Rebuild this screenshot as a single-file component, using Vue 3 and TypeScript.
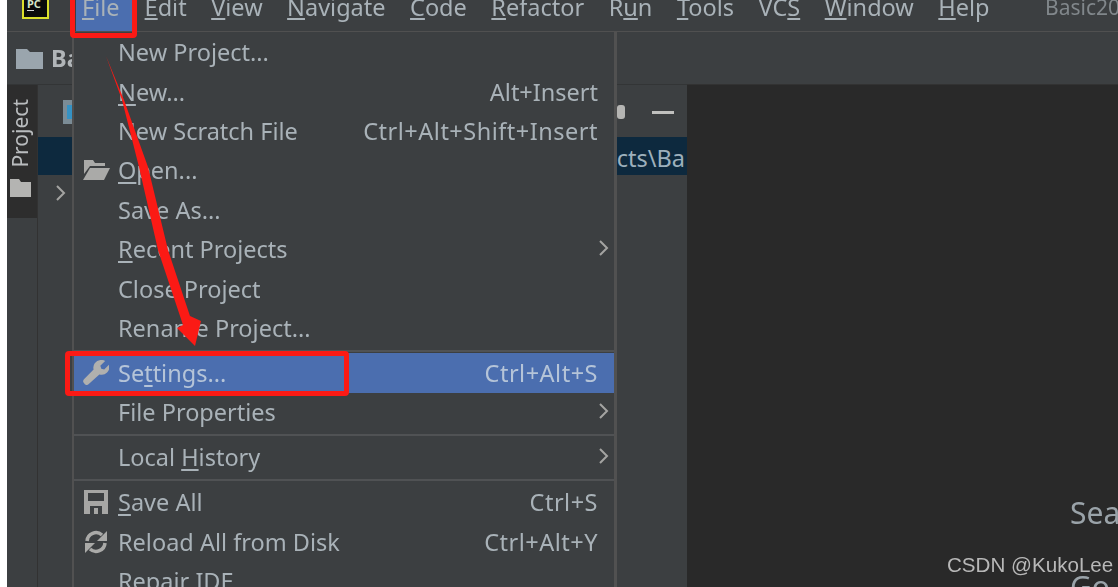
<script setup lang="ts">
interface Part { before: string; key?: string; after?: string }
interface MenuRow {
  label: Part
  shortcut?: string
  icon?: 'open' | 'wrench' | 'save' | 'reload'
  submenu?: boolean
  active?: boolean
  rule?: boolean
}

const topMenu: Part[] = [
  { before: '', key: 'F', after: 'ile' },
  { before: '', key: 'E', after: 'dit' },
  { before: '', key: 'V', after: 'iew' },
  { before: '', key: 'N', after: 'avigate' },
  { before: '', key: 'C', after: 'ode' },
  { before: '', key: 'R', after: 'efactor' },
  { before: 'R', key: 'u', after: 'n' },
  { before: '', key: 'T', after: 'ools' },
  { before: 'VC', key: 'S', after: '' },
  { before: '', key: 'W', after: 'indow' },
  { before: '', key: 'H', after: 'elp' },
]

const rows: MenuRow[] = [
  { label: { before: 'New Project...' } },
  { label: { before: '', key: 'N', after: 'ew...' }, shortcut: 'Alt+Insert' },
  { label: { before: 'New Scratch File' }, shortcut: 'Ctrl+Alt+Shift+Insert' },
  { label: { before: '', key: 'O', after: 'pen...' }, icon: 'open' },
  { label: { before: 'Save As...' } },
  { label: { before: '', key: 'R', after: 'ecent Projects' }, submenu: true },
  { label: { before: 'Close Project' } },
  { label: { before: 'Rename Project...' }, rule: true },
  { label: { before: 'Se', key: 't', after: 'tings...' }, shortcut: 'Ctrl+Alt+S', icon: 'wrench', active: true },
  { label: { before: 'File Properties' }, submenu: true, rule: true },
  { label: { before: 'Local ', key: 'H', after: 'istory' }, submenu: true, rule: true },
  { label: { before: '', key: 'S', after: 'ave All' }, shortcut: 'Ctrl+S', icon: 'save' },
  { label: { before: 'Reload All from Disk' }, shortcut: 'Ctrl+Alt+Y', icon: 'reload' },
  { label: { before: 'Repair IDE' } },
]

const isCtrl = (r: MenuRow): boolean => (r.shortcut ?? '').startsWith('Ctrl')
</script>

<template>
  <div class="page">
    <div class="ide">
      <header class="menubar">
        <div class="logo"><span class="logo-text">PC</span><span class="logo-dash"></span></div>
        <nav class="menus">
          <span v-for="(m, i) in topMenu" :key="i" class="menu-item" :class="{ open: i === 0 }">{{ m.before }}<u>{{ m.key }}</u>{{ m.after }}</span>
        </nav>
        <span class="title">Basic2021</span>
      </header>
      <div class="toolbar">
        <svg class="crumb-icon" width="27" height="21" viewBox="0 0 27 21"><path d="M0 1h11l3 3h13v17H0z" fill="#9aa5ad" /></svg>
        <b class="crumb">Basic</b>
      </div>
      <main class="body">
        <aside class="stripe">
          <div class="tab">
            <span class="tab-text">Project</span>
            <svg width="21" height="18" viewBox="0 0 21 18"><path d="M0 0h9l2 3h10v15H0z" fill="#b4b4b2" /></svg>
          </div>
        </aside>
        <section class="project">
          <div class="project-head">
            <span class="module-icon"><i></i></span>
            <span class="head-actions"><span class="gear"></span><span class="minimize"></span></span>
          </div>
          <div class="path-row"><span>cts\Ba</span></div>
          <svg class="chevron" width="12" height="18" viewBox="0 0 12 18"><path d="M2 2l7 7-7 7" fill="none" stroke="#a4a4a2" stroke-width="2" /></svg>
        </section>
        <section class="editor">
          <span class="hint search">Search Everywhere</span>
          <span class="hint goto">Go to File</span>
        </section>
      </main>
    </div>

    <div class="file-menu">
      <template v-for="(r, i) in rows" :key="i">
        <div class="row" :class="{ active: r.active }">
          <span class="row-icon">
            <svg v-if="r.icon === 'open'" width="27" height="20" viewBox="0 0 27 20">
              <path d="M1 0h9l2 3h10v3H7L1 14z" fill="#aaaaa8" />
              <path d="M7 8h20l-6 12H0z" fill="#aaaaa8" />
            </svg>
            <svg v-else-if="r.icon === 'wrench'" width="26" height="25" viewBox="0 0 27 26">
              <path d="M18 0a8 8 0 0 1 5 1l-5 5 1 3 3 1 5-5a8 8 0 0 1-10 10L6 25a3 3 0 0 1-5-1 3 3 0 0 1 0-4L11 10A8 8 0 0 1 18 0z" fill="#b0b0ae" />
            </svg>
            <svg v-else-if="r.icon === 'save'" width="24" height="24" viewBox="0 0 24 24">
              <path fill-rule="evenodd" d="M0 0h24v24H0zM4 3v8h16V3zM6 16v8h12v-8zM10 18h4v6h-4z" fill="#a6a6a4" />
            </svg>
            <svg v-else-if="r.icon === 'reload'" width="24" height="26" viewBox="0 0 24 26">
              <path d="M3 12a9 9 0 0 1 15-6" fill="none" stroke="#aaaaa8" stroke-width="3.5" />
              <path d="M23 2v10H13z" fill="#aaaaa8" />
              <path d="M21 14a9 9 0 0 1-15 6" fill="none" stroke="#aaaaa8" stroke-width="3.5" />
              <path d="M1 24V14h10z" fill="#aaaaa8" />
            </svg>
          </span>
          <span class="row-label">{{ r.label.before }}<u v-if="r.label.key">{{ r.label.key }}</u>{{ r.label.after }}</span>
          <span v-if="r.shortcut" class="row-shortcut" :class="{ ctrl: isCtrl(r) }">{{ r.shortcut }}</span>
          <svg v-if="r.submenu" class="row-arrow" width="12" height="18" viewBox="0 0 12 18"><path d="M2 2l7 7-7 7" fill="none" stroke="#a4a4a2" stroke-width="2" /></svg>
        </div>
        <div v-if="r.rule" class="sep"></div>
      </template>
    </div>

    <div class="mark mark-file"></div>
    <div class="mark mark-settings"></div>
    <svg class="mark-arrow" width="1118" height="587" viewBox="0 0 1118 587">
      <path d="M106 56L124 100 148 167 168 250 190 316 201 321 195 346 177 328 183 325 158 250 139 167 122 100z" fill="#fb1a15" />
    </svg>
    <span class="watermark">CSDN @KukoLee</span>
  </div>
</template>

<style>
html, body { margin: 0; background: #fff; overflow: hidden; }
</style>

<style scoped>
.page {
  position: relative;
  width: 1118px;
  height: 587px;
  overflow: hidden;
  background: #fff;
  font-family: "Noto Sans", "Open Sans", sans-serif;
  color: #a9b2b8;
}
.ide {
  margin-left: 7px;
  height: 587px;
  display: flex;
  flex-direction: column;
  background: #3c3f41;
  filter: blur(0.35px);
}
.menubar {
  height: 31px;
  flex: none;
  display: flex;
  align-items: flex-start;
  border-bottom: 1px solid #505050;
  font-size: 23.5px;
  line-height: 14px;
}
.logo {
  width: 27px;
  height: 19px;
  margin-left: 15px;
  flex: none;
  box-sizing: border-box;
  border: 2.5px solid #dce02c;
  border-top: none;
  background: #0b0b0b;
  color: #d6e6c8;
  font: bold 11px/8px "Noto Sans", sans-serif;
  padding-left: 3px;
  overflow: hidden;
}
.logo-text { display: block; }
.logo-dash { display: block; width: 7px; height: 1px; margin-top: 2px; background: #d8d8d8; }
.menus {
  display: flex;
  margin-left: 27px;
}
.menu-item {
  padding: 0 6px;
  margin-right: 12.5px;
  height: 31px;
  white-space: nowrap;
}
.menu-item.open { background: #4b6eaf; padding-right: 12px; margin-right: 7px; }
.menu-item u { text-underline-offset: 2px; text-decoration-thickness: 1.5px; }
.title {
  position: absolute;
  left: 1038px;
  top: 0;
  color: #81878b;
  font-size: 21px;
  line-height: 15px;
}
.toolbar {
  height: 53px;
  flex: none;
  display: flex;
  align-items: center;
  padding-left: 9px;
  gap: 8px;
  box-sizing: border-box;
  border-bottom: 1px solid #333536;
}
.crumb { color: #b1b5b8; font-size: 23.5px; }
.body { flex: 1; display: flex; min-height: 0; }
.stripe {
  width: 31px;
  flex: none;
  box-sizing: border-box;
  border-right: 1px solid #323232;
}
.tab {
  height: 133px;
  background: #2d2d2d;
  display: flex;
  flex-direction: column;
  align-items: center;
  padding: 14px 4px 0 0;
  box-sizing: border-box;
  gap: 11px;
}
.tab-text {
  writing-mode: vertical-rl;
  transform: rotate(180deg);
  color: #b9bcbe;
  font-size: 21px;
  line-height: 22px;
}
.project {
  width: 649px;
  flex: none;
  position: relative;
  box-sizing: border-box;
}
.project-head {
  height: 52px;
  display: flex;
  align-items: center;
  justify-content: space-between;
  padding: 2px 13px 0 25px;
  box-sizing: border-box;
}
.module-icon {
  width: 15px;
  height: 24px;
  background: #7b8c96;
  display: flex;
  align-items: center;
  padding-left: 4px;
  box-sizing: border-box;
}
.module-icon i { display: block; width: 11px; height: 14px; background: #3592c4; }
.head-actions { display: flex; align-items: center; gap: 27px; }
.gear { width: 8px; height: 14px; background: #b5b5b3; border-radius: 3px; }
.minimize { width: 22px; height: 3px; background: #c0c0be; }
.path-row {
  height: 38px;
  background: #0d293e;
  display: flex;
  justify-content: flex-end;
  align-items: center;
  padding: 3px 2px 0 0;
  box-sizing: border-box;
  font-size: 23.5px;
  color: #9db0bc;
}
.chevron { position: absolute; left: 17px; top: 99px; }
.editor {
  flex: 1;
  position: relative;
  background: #292929;
  border-top: 1px solid #323232;
  margin-top: -1px;
}
.hint { position: absolute; white-space: nowrap; color: #9aa3a9; font-size: 30px; }
.search { left: 383px; top: 407px; }
.goto { left: 383px; top: 481px; }

/* popup */
.file-menu {
  position: absolute;
  left: 72px;
  top: 32px;
  width: 545px;
  height: 570px;
  padding-top: 0.5px;
  box-sizing: border-box;
  background: #3c3f41;
  border-left: 2px solid #515151;
  border-right: 3px solid #515151;
  font-size: 23.5px;
  filter: blur(0.35px);
}
.row {
  height: 39.4px;
  display: flex;
  align-items: center;
  padding-right: 16px;
  white-space: nowrap;
  line-height: 30px;
}
.row.active { background: #4b6eaf; color: #b5c4d8; }
.sep { height: 2px; margin: 2px 0 1.6px; background: #505254; }
.row u { text-underline-offset: 3px; text-decoration-thickness: 1.5px; }
.row-icon {
  width: 44px;
  flex: none;
  display: flex;
  justify-content: center;
}
.row-label { flex: 1; }
.row-shortcut.ctrl { letter-spacing: 0.5px; }
.row-arrow { margin-right: -12px; margin-top: -3px; }

/* annotations */
.mark {
  position: absolute;
  box-sizing: border-box;
  border: 5px solid #fb1a15;
  border-radius: 4px;
}
.mark-file { left: 70px; top: -8px; width: 67px; height: 46px; }
.mark-settings { left: 65px; top: 351px; width: 284px; height: 45px; }
.mark-arrow { position: absolute; left: 0; top: 0; pointer-events: none; }
.watermark {
  position: absolute;
  left: 947px;
  top: 551px;
  font: 20.6px/28px "Liberation Sans", Arial, sans-serif;
  color: #b8b8b8;
}
</style>
